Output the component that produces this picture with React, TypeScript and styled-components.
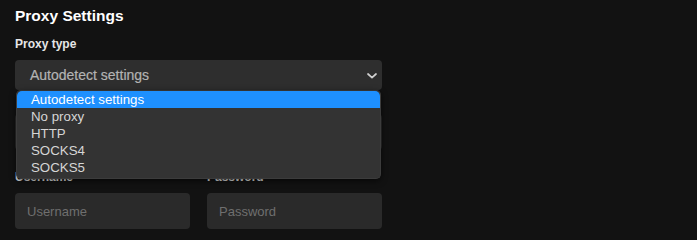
import styled, { createGlobalStyle } from "styled-components";

const GlobalStyle = createGlobalStyle`
  html, body {
    margin: 0;
    padding: 0;
    background: #121212;
  }
  body {
    font-family: "Liberation Sans", Arial, sans-serif;
    color: #fff;
  }
`;

const options = ["Autodetect settings", "No proxy", "HTTP", "SOCKS4", "SOCKS5"];

const App = () => {
  return (
    <>
      <GlobalStyle />
      <Page>
        <Title>Proxy Settings</Title>
        <Field>
          <Label>Proxy type</Label>
          <SelectWrap>
            <SelectBox>
              <span>Autodetect settings</span>
              <Chevron width="10" height="6" viewBox="0 0 10 6">
                <path
                  d="M1 1l4 3.6L9 1"
                  fill="none"
                  stroke="#d0d0d0"
                  strokeWidth="1.7"
                  strokeLinecap="round"
                  strokeLinejoin="round"
                />
              </Chevron>
            </SelectBox>
            <Dropdown>
              {options.map((o, i) => (
                <Option key={o} $active={i === 0}>
                  {o}
                </Option>
              ))}
            </Dropdown>
          </SelectWrap>
        </Field>
        {/* host / port row sits under the open list */}
        <Row $top={24}>
          <Input aria-label="Host" />
          <Input aria-label="Port" />
        </Row>
        <Row $top={19}>
          <Field>
            <Label>Username</Label>
            <Input placeholder="Username" />
          </Field>
          <Field>
            <Label>Password</Label>
            <Input type="password" placeholder="Password" />
          </Field>
        </Row>
      </Page>
    </>
  );
};

export default App;

const Page = styled.div`
  width: 697px;
  height: 240px;
  box-sizing: border-box;
  padding: 6px 15px 0;
  background: #121212;
  overflow: hidden;
`;

const Title = styled.h2`
  margin: 0 0 10px;
  font-size: 15.5px;
  line-height: 20px;
  font-weight: 700;
  color: #fff;
`;

const Field = styled.div`
  display: flex;
  flex-direction: column;
  gap: 8px;
  width: 367px;
`;

const Row = styled.div<{ $top: number }>`
  display: grid;
  grid-template-columns: 175px 175px;
  column-gap: 17px;
  width: 367px;
  margin-top: ${({ $top }) => $top}px;
  > div {
    width: auto;
  }
`;

const Label = styled.label`
  font-size: 12px;
  line-height: 16px;
  font-weight: 700;
  color: #e6e6e6;
`;

const SelectWrap = styled.div`
  position: relative;
`;

const SelectBox = styled.div`
  height: 30px;
  box-sizing: border-box;
  display: flex;
  align-items: center;
  justify-content: space-between;
  padding: 0 5px 0 15px;
  background: #2e2e2e;
  border-radius: 4px;
  font-size: 14px;
  color: #b3b3b3;
  -webkit-text-stroke: 0.2px #b3b3b3;
`;

const Chevron = styled.svg`
  display: block;
  margin-top: 1px;
`;

const Dropdown = styled.div`
  position: absolute;
  top: 30px;
  left: 1px;
  right: 1px;
  z-index: 2;
  box-sizing: border-box;
  padding: 1px 0 2px;
  background: #333333;
  border: 1px solid #3c3c3c;
  border-top: none;
  border-radius: 5px;
  box-shadow: 0 2px 6px rgba(0, 0, 0, 0.6);
  overflow: hidden;
`;

const Option = styled.div<{ $active?: boolean }>`
  height: 17px;
  line-height: 17px;
  padding-left: 14px;
  font-size: 13.3px;
  color: ${({ $active }) => ($active ? "#ffffff" : "#d6d6d6")};
  background: ${({ $active }) => ($active ? "#1e90ff" : "transparent")};
  border-radius: ${({ $active }) => ($active ? "5px 5px 0 0" : "0")};
`;

const Input = styled.input`
  height: 36px;
  box-sizing: border-box;
  padding: 0 12px;
  border: none;
  outline: none;
  border-radius: 4px;
  background: #2a2a2a;
  font-family: "Liberation Sans", Arial, sans-serif;
  font-size: 13px;
  color: #fff;
  &::placeholder {
    color: #6f6f6f;
  }
`;
